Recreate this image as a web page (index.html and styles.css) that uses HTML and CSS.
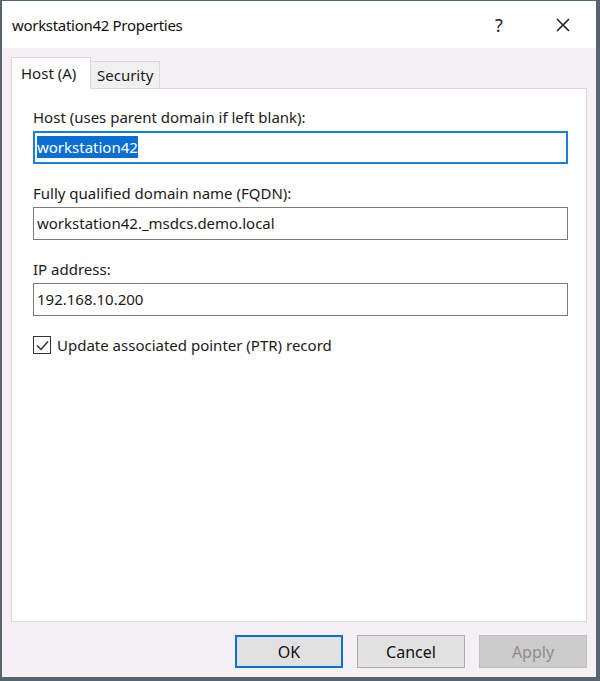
FILE: index.html
```html
<!DOCTYPE html>
<html lang="en">
<head>
  <meta charset="UTF-8">
  <title>workstation42 Properties</title>
  <link rel="stylesheet" href="styles.css">
</head>
<body>
  <div class="dialog">
    <div class="titlebar">
      <span class="title">workstation42 Properties</span>
      <span class="title-btn help">?</span>
      <span class="title-btn close">
        <svg width="16" height="16" viewBox="0 0 16 16"><path d="M2 2 L14 14 M14 2 L2 14" stroke="#222" stroke-width="1.6" fill="none"/></svg>
      </span>
    </div>
    <div class="body">
      <div class="tabs">
        <div class="tab active">Host (A)</div>
        <div class="tab">Security</div>
      </div>
      <div class="panel">
        <div class="field">
          <label>Host (uses parent domain if left blank):</label>
          <div class="input focused"><span class="sel">workstation42</span></div>
        </div>
        <div class="field">
          <label>Fully qualified domain name (FQDN):</label>
          <div class="input">workstation42._msdcs.demo.local</div>
        </div>
        <div class="field">
          <label>IP address:</label>
          <div class="input">192.168.10.200</div>
        </div>
        <div class="check">
          <span class="box">
            <svg width="15" height="15" viewBox="0 0 15 15"><path d="M2 7.5 L6 11.5 L13 3.5" stroke="#333" stroke-width="1.5" fill="none"/></svg>
          </span>
          <span>Update associated pointer (PTR) record</span>
        </div>
      </div>
      <div class="buttons">
        <button class="btn default">OK</button>
        <button class="btn">Cancel</button>
        <button class="btn disabled">Apply</button>
      </div>
    </div>
  </div>
</body>
</html>
```

FILE: styles.css
```css
html, body {
  margin: 0;
  padding: 0;
}
body {
  font-family: "Noto Sans", "Liberation Sans", sans-serif;
  font-size: 15px;
  color: #1a1a1a;
}
.dialog {
  width: 600px;
  height: 681px;
  box-sizing: border-box;
  border-style: solid;
  border-color: #56646f;
  border-width: 1px 4px 4px 2px;
  display: flex;
  flex-direction: column;
  background-color: #f4f0f3;
}
.titlebar {
  height: 47px;
  background-color: white;
  display: flex;
  align-items: center;
  padding-left: 10px;
}
.title {
  font-size: 15px;
  letter-spacing: -0.3px;
  flex: 1;
  color: #111;
}
.title-btn {
  width: 68px;
  text-align: center;
  font-size: 18px;
  color: #222;
}
.help {
  margin-right: -4px;
}
.close {
  display: flex;
  justify-content: center;
  margin-right: -1px;
}
.body {
  flex: 1;
  display: flex;
  flex-direction: column;
  padding: 9px 9px 0 9px;
}
.tabs {
  display: flex;
  align-items: flex-end;
  height: 31px;
  position: relative;
  z-index: 1;
}
.tab {
  padding: 0 6px;
  height: 27px;
  line-height: 26px;
  border: 1px solid #d9d9d9;
  border-bottom: none;
  background-color: #f0f0f0;
  box-sizing: border-box;
}
.tab.active {
  height: 32px;
  line-height: 30px;
  background-color: white;
  margin-bottom: -1px;
  width: 80px;
  padding: 0 9px;
}
.tab + .tab {
  border-left: none;
}
.panel {
  height: 534px;
  box-sizing: border-box;
  background-color: white;
  border: 1px solid #d9d9d9;
  padding: 18px 18px 0 21px;
}
.field {
  margin-bottom: 19px;
}
.field label {
  display: block;
  height: 24px;
  line-height: 20px;
}
.input {
  height: 33px;
  width: 535px;
  box-sizing: border-box;
  border: 1px solid #7a7a7a;
  padding: 0 3px;
  line-height: 31px;
  background-color: white;
}
.input.focused {
  border: 2px solid #1a7fd8;
  line-height: 29px;
  padding: 0 2px;
}
.sel {
  background-color: #0a6fd0;
  color: white;
  padding: 1px 0;
}
.check {
  display: flex;
  align-items: center;
  gap: 6px;
  margin-top: 1px;
}
.box {
  width: 16px;
  height: 16px;
  border: 1px solid #333;
  display: flex;
  align-items: center;
  justify-content: center;
  background-color: white;
}
.buttons {
  display: flex;
  justify-content: flex-end;
  gap: 14px;
  padding-top: 13px;
}
.btn {
  width: 108px;
  height: 33px;
  font-family: inherit;
  font-size: 16px;
  background-color: #e1e1e1;
  border: 1px solid #adadad;
  color: #111;
  padding: 0;
}
.btn.default {
  border: 2px solid #0a6fd0;
}
.btn.disabled {
  background-color: #cccccc;
  border-color: #bfbfbf;
  color: #8c8c8c;
}
```
